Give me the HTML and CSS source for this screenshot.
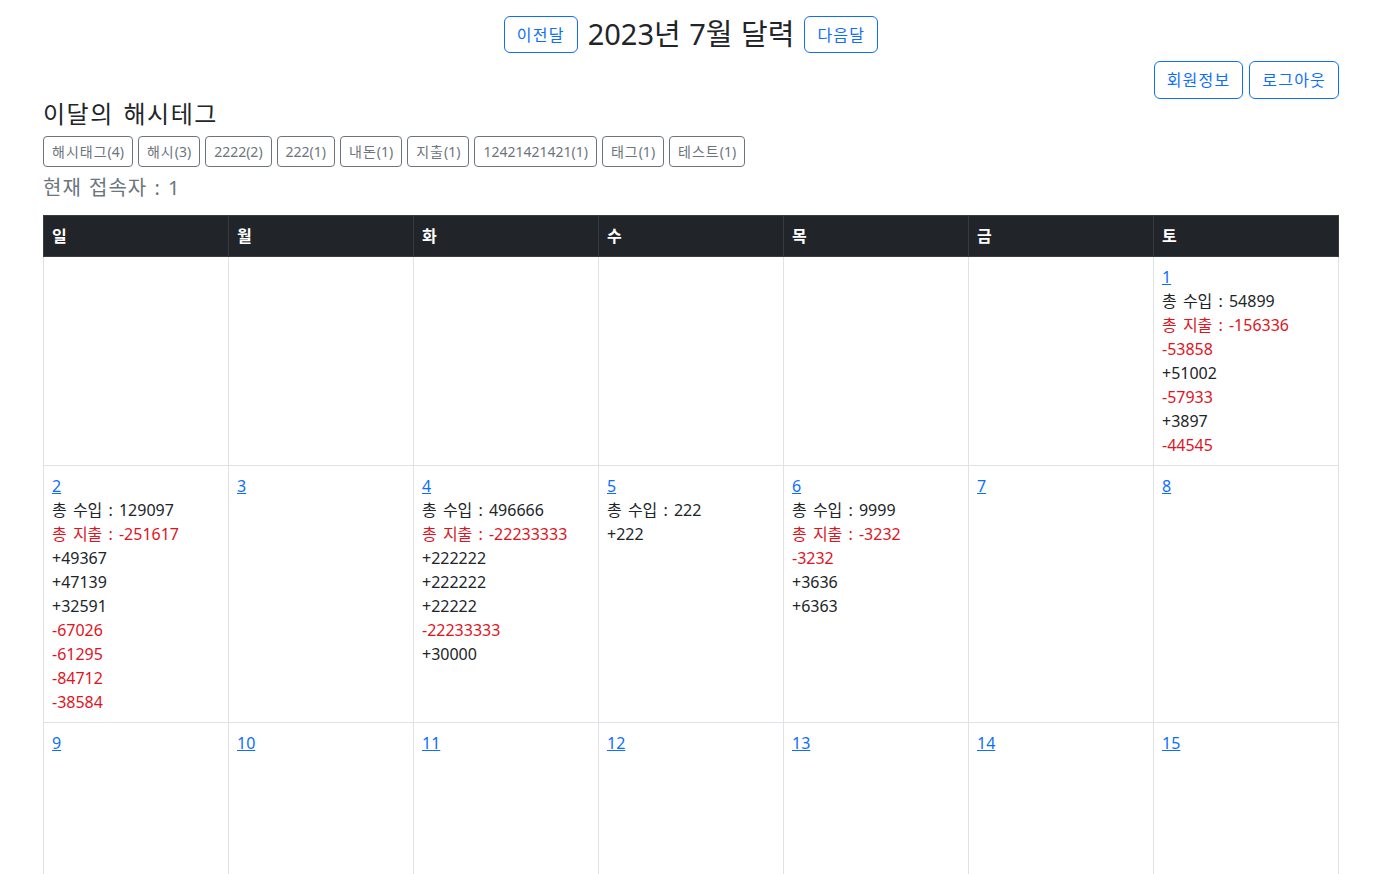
FILE: index.html
```html
<!DOCTYPE html>
<html lang="ko">
<head>
<meta charset="utf-8">
<title>2023년 7월 달력</title>
<link rel="stylesheet" href="styles.css">
</head>
<body>
<div class="container">
  <div class="month-bar">
    <button class="btn btn-primary-outline">이전달</button>
    <h2 class="month-title">2023년 7월 달력</h2>
    <button class="btn btn-primary-outline">다음달</button>
  </div>
  <div class="user-bar">
    <button class="btn btn-primary-outline">회원정보</button>
    <button class="btn btn-primary-outline">로그아웃</button>
  </div>
  <h4 class="section-title">이달의 해시테그</h4>
  <div class="tags">
    <button class="btn-sm"><span class="ko">해시태그</span>(4)</button>
    <button class="btn-sm"><span class="ko">해시</span>(3)</button>
    <button class="btn-sm">2222(2)</button>
    <button class="btn-sm">222(1)</button>
    <button class="btn-sm"><span class="ko">내돈</span>(1)</button>
    <button class="btn-sm"><span class="ko">지출</span>(1)</button>
    <button class="btn-sm">12421421421(1)</button>
    <button class="btn-sm"><span class="ko">태그</span>(1)</button>
    <button class="btn-sm"><span class="ko">테스트</span>(1)</button>
  </div>
  <h5 class="visitors">현재 접속자 : 1</h5>
  <table class="calendar">
    <thead>
      <tr><th>일</th><th>월</th><th>화</th><th>수</th><th>목</th><th>금</th><th>토</th></tr>
    </thead>
    <tbody>
      <tr>
        <td></td><td></td><td></td><td></td><td></td><td></td>
        <td>
          <a href="#">1</a>
          <div class="line">총 수입 : 54899</div>
          <div class="line neg">총 지출 : -156336</div>
          <div class="line neg">-53858</div>
          <div class="line">+51002</div>
          <div class="line neg">-57933</div>
          <div class="line">+3897</div>
          <div class="line neg">-44545</div>
        </td>
      </tr>
      <tr>
        <td>
          <a href="#">2</a>
          <div class="line">총 수입 : 129097</div>
          <div class="line neg">총 지출 : -251617</div>
          <div class="line">+49367</div>
          <div class="line">+47139</div>
          <div class="line">+32591</div>
          <div class="line neg">-67026</div>
          <div class="line neg">-61295</div>
          <div class="line neg">-84712</div>
          <div class="line neg">-38584</div>
        </td>
        <td><a href="#">3</a></td>
        <td>
          <a href="#">4</a>
          <div class="line">총 수입 : 496666</div>
          <div class="line neg">총 지출 : -22233333</div>
          <div class="line">+222222</div>
          <div class="line">+222222</div>
          <div class="line">+22222</div>
          <div class="line neg">-22233333</div>
          <div class="line">+30000</div>
        </td>
        <td>
          <a href="#">5</a>
          <div class="line">총 수입 : 222</div>
          <div class="line">+222</div>
        </td>
        <td>
          <a href="#">6</a>
          <div class="line">총 수입 : 9999</div>
          <div class="line neg">총 지출 : -3232</div>
          <div class="line neg">-3232</div>
          <div class="line">+3636</div>
          <div class="line">+6363</div>
        </td>
        <td><a href="#">7</a></td>
        <td><a href="#">8</a></td>
      </tr>
      <tr>
        <td><a href="#">9</a></td><td><a href="#">10</a></td><td><a href="#">11</a></td><td><a href="#">12</a></td><td><a href="#">13</a></td><td><a href="#">14</a></td><td><a href="#">15</a></td>
      </tr>
      <tr>
        <td><a href="#">16</a></td><td><a href="#">17</a></td><td><a href="#">18</a></td><td><a href="#">19</a></td><td><a href="#">20</a></td><td><a href="#">21</a></td><td><a href="#">22</a></td>
      </tr>
      <tr>
        <td><a href="#">23</a></td><td><a href="#">24</a></td><td><a href="#">25</a></td><td><a href="#">26</a></td><td><a href="#">27</a></td><td><a href="#">28</a></td><td><a href="#">29</a></td>
      </tr>
      <tr>
        <td><a href="#">30</a></td><td><a href="#">31</a></td><td></td><td></td><td></td><td></td><td></td>
      </tr>
    </tbody>
  </table>
</div>
</body>
</html>
```

FILE: styles.css
```css
* { box-sizing: border-box; }

body {
  margin: 0;
  font-family: "Noto Sans", "Noto Sans CJK KR", sans-serif;
  font-size: 16px;
  line-height: 24px;
  color: #212529;
  background: #fff;
}

.container {
  max-width: 1319px;
  margin: 0 auto;
  padding: 0 12px 0 11px;
}

.month-bar {
  display: flex;
  justify-content: center;
  align-items: center;
  gap: 10px;
  margin-top: 15px;
  margin-bottom: 8px;
  height: 38px;
}

.month-title {
  margin: 0;
  font-size: 29px;
  font-weight: 400;
  line-height: 38px;
  word-spacing: 1px;
}

.btn {
  font-family: inherit;
  font-size: 16px;
  line-height: 24px;
  padding: 6px 12px;
  background: #fff;
  border: 1px solid #0d6efd;
  border-radius: 6px;
  letter-spacing: 1.2px;
  cursor: pointer;
}

.btn-primary-outline {
  color: #0d6efd;
  height: 37px;
}

.user-bar {
  display: flex;
  justify-content: flex-end;
  gap: 6px;
}

.user-bar .btn {
  height: 38px;
}

.section-title {
  margin: 0 0 8px;
  font-size: 24px;
  font-weight: 400;
  line-height: 29px;
  letter-spacing: 1.5px;
  word-spacing: 2px;
}

.tags {
  display: flex;
  flex-wrap: wrap;
  gap: 5px;
}

.btn-sm {
  font-family: inherit;
  font-size: 14px;
  line-height: 21px;
  height: 31px;
  padding: 4px 8px;
  color: #6c757d;
  background: #fff;
  border: 1px solid #6c757d;
  border-radius: 4px;
  cursor: pointer;
}

.ko {
  letter-spacing: 1px;
}

.visitors {
  margin: 9px 0 15px;
  font-size: 20px;
  font-weight: 400;
  line-height: 24px;
  color: #6c757d;
  letter-spacing: 1px;
  word-spacing: 1px;
}

.calendar {
  width: 100%;
  border-collapse: collapse;
  table-layout: fixed;
}

.calendar th {
  background: #212529;
  color: #fff;
  text-align: left;
  font-weight: 700;
  padding: 8px;
  height: 41px;
  border: 1px solid #373b3e;
}

.calendar td {
  vertical-align: top;
  padding: 8px;
  height: 200px;
  border: 1px solid #dee2e6;
}

.calendar a {
  color: #0d6efd;
  text-decoration: underline;
  display: block;
  width: max-content;
}

.line {
  height: 24px;
  white-space: nowrap;
  word-spacing: 2px;
}

.neg {
  color: #e0141e;
}
```
